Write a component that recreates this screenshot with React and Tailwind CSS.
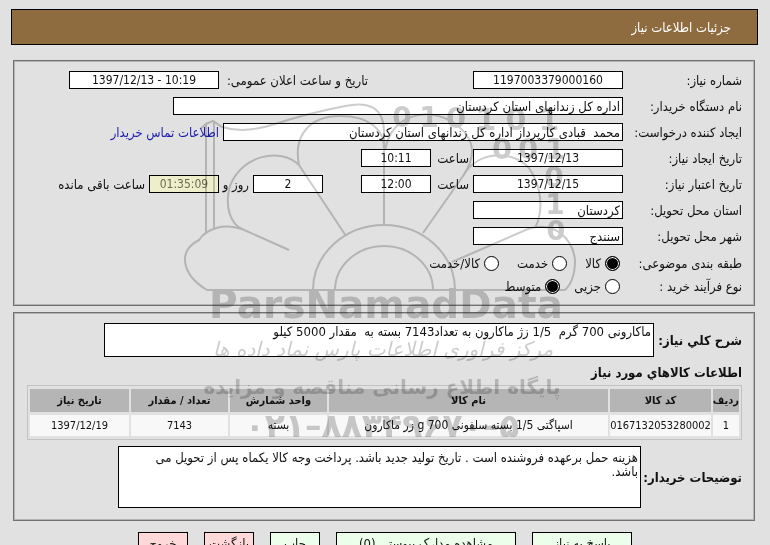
import clsx from 'clsx'

const items = [
  {
    row: '1',
    code: '0167132053280002',
    name: 'اسپاگتی 1/5 بسته سلفونی 700 g زر ماکارون',
    unit: 'بسته',
    amount: '7143',
    date: '1397/12/19',
  },
]

function Field({ id, label, children }) {
  return (
    <div className="flex h-[18px] items-center gap-1">
      <label htmlFor={id} className="w-[115px] shrink-0 whitespace-nowrap">{label}</label>
      {children}
    </div>
  )
}

function TextBox({ className, ...props }) {
  return (
    <input
      type="text"
      readOnly
      className={clsx('h-[18px] shrink-0 border border-black px-0.5', className)}
      {...props}
    />
  )
}

function Radio({ name, label, checked }) {
  return (
    <label className="flex items-center gap-1">
      <input
        type="radio"
        name={name}
        defaultChecked={checked}
        className="size-[15px] appearance-none rounded-full border border-black bg-white checked:bg-black checked:shadow-[inset_0_0_0_1px_white]"
      />
      <span className="whitespace-nowrap">{label}</span>
    </label>
  )
}

function Panel({ className, children }) {
  return (
    <section className={clsx('mr-[15px] ml-[13px] border border-[#707070] pr-3 shadow-[inset_0_0_0_1px_#b4b4b4]', className)}>
      {children}
    </section>
  )
}

function Watermark() {
  return (
    <svg
      className="pointer-events-none absolute top-[95px] left-[170px] opacity-50 mix-blend-multiply"
      width="410"
      height="355"
      viewBox="170 95 410 355"
      direction="ltr"
      aria-hidden="true"
    >
      <g fill="none" stroke="#999" strokeWidth="2">
        <path d="M206 234V124L200 129M206 124L213 121L222 127Q245 134 275 124T345 106Q384 98 384 132V225M214 121V230" />
        <path d="M299 165C293 135 310 116 340 116C370 116 385 130 384 150M299 165L346 236" />
        <path d="M299 165C280 147 242 155 230 186C224 207 231 224 242 229L289 250" />
        <path d="M242 229C225 223 207 228 199 240C177 251 182 275 207 290H565" />
        <path d="M313 290A71 65 0 0 1 455 290M335 290A49 44 0 0 1 433 290" />
        <path d="M385 150C392 115 425 107 451 121C481 140 473 161 463 176L423 233" />
        <path d="M463 176C477 151 512 149 529 168C543 188 543 213 535 228M452 262L528 229C555 220 573 240 575 260Q575 281 565 290" />
      </g>
      <g fill="#999" fontFamily="'DejaVu Sans', sans-serif" fontWeight="bold" textAnchor="middle">
        <text x="402" y="127" fontSize="28">0</text>
        <text x="429" y="127" fontSize="28">1</text>
        <text x="456" y="128" fontSize="29">0</text>
        <text x="486" y="130" fontSize="30">1</text>
        <text x="516" y="130" fontSize="30">0</text>
        <text x="549" y="130" fontSize="30">1</text>
        <text x="502" y="159" fontSize="29">0</text>
        <text x="528" y="159" fontSize="29">0</text>
        <text x="555" y="159" fontSize="29">1</text>
        <text x="554" y="187" fontSize="28">0</text>
        <text x="555" y="214" fontSize="28">1</text>
        <text x="556" y="240" fontSize="27">0</text>
        <text x="386" y="318" fontSize="39">ParsNamadData</text>
      </g>
      <g fill="#999" fontFamily="'DejaVu Sans', sans-serif" textAnchor="middle">
        <text x="383" y="356" fontSize="20" fontStyle="italic" direction="rtl">مرکز فرآوری اطلاعات پارس نماد داده ها</text>
        <text x="382" y="394" fontSize="20" fontWeight="bold" direction="rtl">پایگاه اطلاع رسانی مناقصه و مزایده</text>
        <text x="382" y="437" fontSize="33" fontWeight="bold">۰۲۱–۸۸۳۴۹۶۷۰–۵</text>
      </g>
    </svg>
  )
}

export default function App() {
  return (
    <div
      dir="rtl"
      lang="fa"
      className="relative h-screen overflow-hidden bg-[#e1e1e1] pt-[9px] font-['DejaVu_Sans_Condensed','DejaVu_Sans',sans-serif] text-[13px] leading-[15px] text-[#111]"
    >
      <header className="mr-3 ml-[11px] flex h-9 items-center border border-black bg-[#8f6c40] pr-[26px]">
        <h1 className="text-white">جزئیات اطلاعات نیاز</h1>
      </header>

      <Panel className="mt-[15px] flex flex-col gap-2 pt-2.5 pb-[9px]">
        <Field id="number" label="شماره نیاز:">
          <TextBox id="number" className="w-[150px] bg-white text-center text-[12px]" defaultValue="1197003379000160" />
          <label htmlFor="announced" className="mr-[101px] w-[145px] shrink-0 whitespace-nowrap">تاریخ و ساعت اعلان عمومی:</label>
          <TextBox id="announced" dir="ltr" className="w-[150px] bg-white text-center text-[12px]" defaultValue="1397/12/13 - 10:19" />
        </Field>
        <Field id="buyer" label="نام دستگاه خریدار:">
          <TextBox id="buyer" className="w-[450px] bg-white" defaultValue="اداره کل زندانهای استان کردستان" />
        </Field>
        <Field id="creator" label="ایجاد کننده درخواست:">
          <TextBox id="creator" className="w-[400px] bg-white" defaultValue="محمد  قبادی کارپرداز اداره کل زندانهای استان کردستان" />
          <a href="#contact" className="whitespace-nowrap text-[#1a1ab0]">اطلاعات تماس خریدار</a>
        </Field>
        <Field id="created" label="تاریخ ایجاد نیاز:">
          <TextBox id="created" dir="ltr" className="w-[150px] bg-white text-center text-[12px]" defaultValue="1397/12/13" />
          <label htmlFor="createdTime" className="w-[34px] shrink-0">ساعت</label>
          <TextBox id="createdTime" className="w-[70px] bg-white text-center text-[12px]" defaultValue="10:11" />
        </Field>
        <Field id="expires" label="تاریخ اعتبار نیاز:">
          <TextBox id="expires" dir="ltr" className="w-[150px] bg-white text-center text-[12px]" defaultValue="1397/12/15" />
          <label htmlFor="expiresTime" className="w-[34px] shrink-0">ساعت</label>
          <TextBox id="expiresTime" className="w-[70px] bg-white text-center text-[12px]" defaultValue="12:00" />
          <TextBox id="days" className="mr-[34px] w-[70px] bg-white text-center text-[12px]" defaultValue="2" />
          <label htmlFor="days" className="w-[26px] shrink-0 whitespace-nowrap">روز و</label>
          <TextBox id="remaining" className="w-[70px] bg-[#eeeecb] text-center text-[12px] text-[#6b6b50]" defaultValue="01:35:09" />
          <label htmlFor="remaining" className="whitespace-nowrap">ساعت باقی مانده</label>
        </Field>
        <Field id="province" label="استان محل تحویل:">
          <TextBox id="province" className="w-[150px] bg-white" defaultValue="کردستان" />
        </Field>
        <Field id="city" label="شهر محل تحویل:">
          <TextBox id="city" className="w-[150px] bg-white" defaultValue="سنندج" />
        </Field>
        <div className="flex flex-col gap-[3px]">
          <div role="radiogroup" aria-labelledby="category" className="flex h-5 items-center">
            <span id="category" className="w-[122px] shrink-0">طبقه بندی موضوعی:</span>
            <div className="flex gap-[18px]">
              <Radio name="category" label="کالا" checked />
              <Radio name="category" label="خدمت" />
              <Radio name="category" label="کالا/خدمت" />
            </div>
          </div>
          <div role="radiogroup" aria-labelledby="process" className="flex h-5 items-center">
            <span id="process" className="w-[122px] shrink-0">نوع فرآیند خرید :</span>
            <div className="flex gap-3.5">
              <Radio name="process" label="جزیی" />
              <Radio name="process" label="متوسط" checked />
            </div>
          </div>
        </div>
      </Panel>

      <Panel className="mt-1.5 pt-2.5 pb-3">
        <div className="flex items-center">
          <label htmlFor="summary" className="w-[88px] shrink-0 whitespace-nowrap font-bold">شرح کلي نیاز:</label>
          <textarea
            id="summary"
            readOnly
            className="h-[34px] w-[550px] resize-none border border-black bg-white px-0.5"
            defaultValue="ماکارونی 700 گرم  1/5 زژ ماکارون به تعداد7143 بسته به  مقدار 5000 کیلو"
          />
        </div>

        <h2 className="mt-2 mb-[5px] font-bold">اطلاعات کالاهاي مورد نیاز</h2>
        <div className="ml-[13px]">
          <table className="w-full table-fixed border-separate border-spacing-x-0.5 border-spacing-y-[3px] border border-[#c2c2c2] text-center text-[11px] leading-[15px]">
            <thead>
              <tr className="h-[23px] bg-[#b5b5b5]">
                <th className="w-[26px]">ردیف</th>
                <th className="w-[101px]">کد کالا</th>
                <th>نام کالا</th>
                <th className="w-[97px]">واحد شمارش</th>
                <th className="w-[97px]">تعداد / مقدار</th>
                <th className="w-[99px]">تاریخ نیاز</th>
              </tr>
            </thead>
            <tbody>
              {items.map((item) => (
                <tr key={item.row} className="h-[21px] bg-[#f8f8f8]">
                  <td>{item.row}</td>
                  <td>{item.code}</td>
                  <td className="text-[12px]">{item.name}</td>
                  <td className="text-[12px]">{item.unit}</td>
                  <td>{item.amount}</td>
                  <td>{item.date}</td>
                </tr>
              ))}
            </tbody>
          </table>
        </div>

        <div className="mt-1.5 flex items-center">
          <label htmlFor="notes" className="w-[101px] shrink-0 whitespace-nowrap font-bold">توضیحات خریدار:</label>
          <textarea
            id="notes"
            readOnly
            className="h-[62px] w-[523px] resize-none border border-black bg-white pt-1 pr-0.5 pl-[18px] leading-[14px]"
            defaultValue="هزینه حمل برعهده فروشنده است . تاریخ تولید جدید باشد. پرداخت وجه کالا یکماه پس از تحویل می باشد."
          />
        </div>
      </Panel>

      <div className="mt-[11px] flex justify-center gap-4">
        <button type="button" className="h-[22px] w-[100px] border border-black bg-[#ebffeb]">پاسخ به نیاز</button>
        <button type="button" className="h-[22px] w-[180px] border border-black bg-[#ebffeb]">مشاهده مدارک پیوستی (0)</button>
        <button type="button" className="h-[22px] w-[50px] border border-black bg-[#ebffeb]">چاپ</button>
        <button type="button" className="h-[22px] w-[50px] border border-black bg-[#ffd9d9]">بازگشت</button>
        <button type="button" className="h-[22px] w-[50px] border border-black bg-[#ffd9d9]">خروج</button>
      </div>

      <Watermark />
    </div>
  )
}
